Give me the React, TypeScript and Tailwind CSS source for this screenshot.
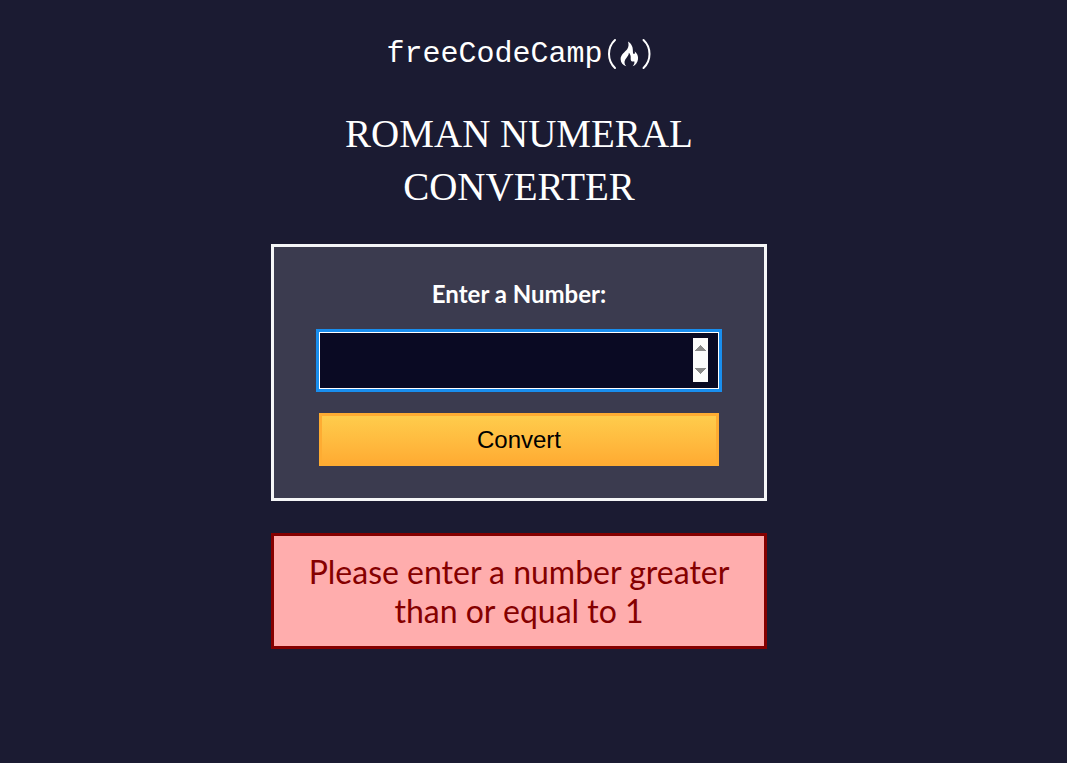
import { useState } from "react";

function Emblem() {
  return (
    <svg viewBox="0 0 46 32" className="h-8 w-[46px]" fill="none" aria-hidden="true">
      <path d="M9 2C1 9.500 1 22.500 9 30" stroke="#fff" strokeWidth="2" strokeLinecap="round" />
      <path d="M37.500 2C45.500 9.500 45.500 22.500 37.500 30" stroke="#fff" strokeWidth="2" strokeLinecap="round" />
      <path
        fill="#fff"
        d="M22 3.500C26 6 27 9.500 26.900 13C26.900 15 27.200 16 28 16C29 16 29.200 14.500 28.600 13.300C31.200 15.500 32.400 18 32 21.200C31.600 24.500 29.800 27 26.600 28.300C28.200 26.400 28.800 24.800 28.200 23.200C27 24 25.200 23.600 24.800 22C24.500 20.500 25 19 24.400 17.300C24 16 23.500 15.300 22.900 14.800C22.900 17.500 20.600 19.300 19.300 21.600C18 24 18.300 26.500 20.300 28.300C17 27.200 14.700 24.600 14.600 21.200C14.500 16.600 19 14 21.200 11.200C22.900 8.800 22.800 6.100 22 3.500Z"
      />
    </svg>
  );
}

export default function App() {
  const [value, setValue] = useState("");
  return (
    <div className="flex min-h-screen flex-col items-center bg-[#1b1b32] pr-[29px] pt-9 pb-8 font-['Lato',sans-serif] text-white">
      <main className="flex w-full max-w-[496px] flex-col items-center">
        <a href="#" className="flex h-9 items-center gap-[3px]" aria-label="freeCodeCamp">
          <span className="font-['Liberation_Mono',monospace] text-[30px] leading-9">freeCodeCamp</span>
          <Emblem />
        </a>
        <h1 className="mt-[35px] text-center font-['Liberation_Serif',serif] text-[39px] leading-[53px]">
          ROMAN NUMERAL CONVERTER
        </h1>
        <form
          noValidate
          onSubmit={(e) => e.preventDefault()}
          className="mt-[31px] flex w-full flex-col gap-6 border-3 border-[#f5f6f7] bg-[#3b3b4f] px-[45px] py-8"
        >
          <label htmlFor="number" className="text-center text-2xl leading-[29px] font-bold">
            Enter a Number:
          </label>
          <input
            id="number"
            type="number"
            value={value}
            onChange={(e) => setValue(e.target.value)}
            className="h-[57px] w-full border border-white bg-[#0a0a23] px-2.5 pt-[5px] pb-1.5 text-center text-4xl text-white outline-3 outline-[#198eee] [&::-webkit-inner-spin-button]:opacity-100"
          />
          <button
            type="submit"
            className="h-[53px] w-full border-3 border-[#feac32] bg-linear-to-b from-[#fecc4c] to-[#ffac33] font-['Liberation_Sans',sans-serif] text-2xl text-black"
          >
            Convert
          </button>
        </form>
        <div
          role="alert"
          className="mt-8 w-full border-3 border-[#850000] bg-[#ffadad] p-4 text-center text-[32px] leading-[39px] text-[#850000]"
        >
          Please enter a number greater than or equal to 1
        </div>
      </main>
    </div>
  );
}
